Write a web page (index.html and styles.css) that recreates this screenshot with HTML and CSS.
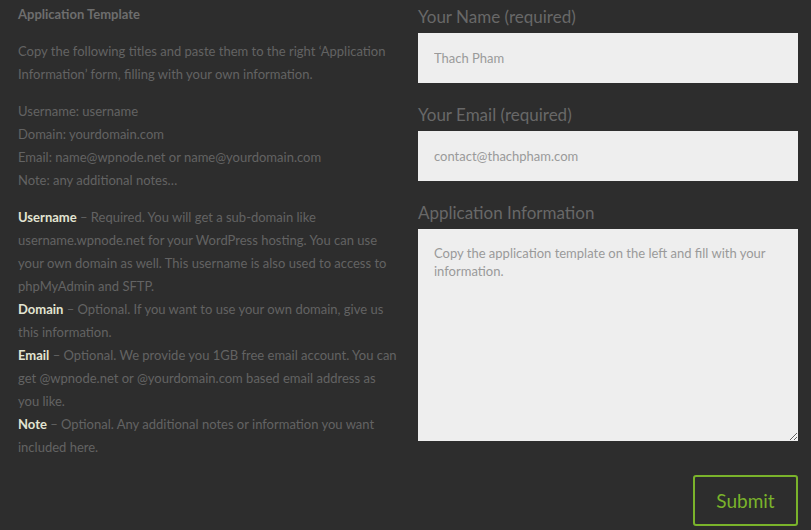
FILE: index.html
```html
<!DOCTYPE html>
<html lang="en">
<head>
    <title>Application</title>
    <link rel="stylesheet" href="styles.css">
</head>
<body>
    <div class="page">
        <!-- Left: template instructions -->
        <div class="template">
            <h4>Application Template</h4>
            <p>Copy the following titles and paste them to the right ‘Application Information’ form, filling with your own information.</p>
            <p>Username: username<br>
            Domain: yourdomain.com<br>
            Email: name@wpnode.net or name@yourdomain.com<br>
            Note: any additional notes…</p>
            <p class="notes">
                <strong>Username</strong> – Required. You will get a sub-domain like username.wpnode.net for your WordPress hosting. You can use your own domain as well. This username is also used to access to phpMyAdmin and SFTP.<br>
                <strong>Domain</strong> – Optional. If you want to use your own domain, give us this information.<br>
                <strong>Email</strong> – Optional. We provide you 1GB free email account. You can get @wpnode.net or @yourdomain.com based email address as you like.<br>
                <strong>Note</strong> – Optional. Any additional notes or information you want included here.
            </p>
        </div>

        <!-- Right: application form -->
        <form class="apply-form">
            <label for="name">Your Name (required)</label>
            <input type="text" id="name" placeholder="Thach Pham">
            <label for="email">Your Email (required)</label>
            <input type="text" id="email" placeholder="contact@thachpham.com">
            <label for="info">Application Information</label>
            <textarea id="info" placeholder="Copy the application template on the left and fill with your information."></textarea>
            <div class="actions">
                <button type="button">Submit</button>
            </div>
        </form>
    </div>
</body>
</html>
```

FILE: styles.css
```css
body {
    font-family: Lato, "Open Sans", sans-serif;
    background-color: #2d2d2d;
    color: #636363;
    margin: 0;
    padding: 0;
}

.page {
    display: flex;
    padding: 0 13px 0 18px;
}

.template {
    width: 380px;
    margin-right: 2px;
    font-size: 13px;
    line-height: 23px;
}

.template h4 {
    font-size: 13px;
    font-weight: bold;
    color: #6e6e6e;
    margin: 3px 0 14px;
}

.template p {
    margin: 0 0 14px;
}

.template .notes {
    margin-top: 14px;
}

.template strong {
    color: #e2e4d2;
    font-weight: bold;
}

.apply-form {
    margin-left: 18px;
    width: 380px;
    display: flex;
    flex-direction: column;
}

label {
    font-size: 17px;
    line-height: 22px;
    color: #686868;
    margin: 6px 0 5px;
}

input[type="text"], textarea {
    background-color: #eeeeee;
    border: none;
    padding: 0 16px;
    font-family: inherit;
    font-size: 13px;
    color: #999;
    margin-bottom: 15px;
}

input[type="text"] {
    height: 50px;
}

textarea {
    height: 212px;
    padding: 15px 16px;
    line-height: 18px;
    margin-bottom: 34px;
    box-sizing: border-box;
}

::placeholder {
    color: #9a9a9a;
}

.actions {
    display: flex;
    justify-content: flex-end;
}

button[type="button"] {
    background: transparent;
    border: 2px solid #7ab32b;
    border-radius: 3px;
    color: #7ab32b;
    font-family: inherit;
    font-size: 19px;
    width: 105px;
    height: 51px;
    cursor: pointer;
}
```
